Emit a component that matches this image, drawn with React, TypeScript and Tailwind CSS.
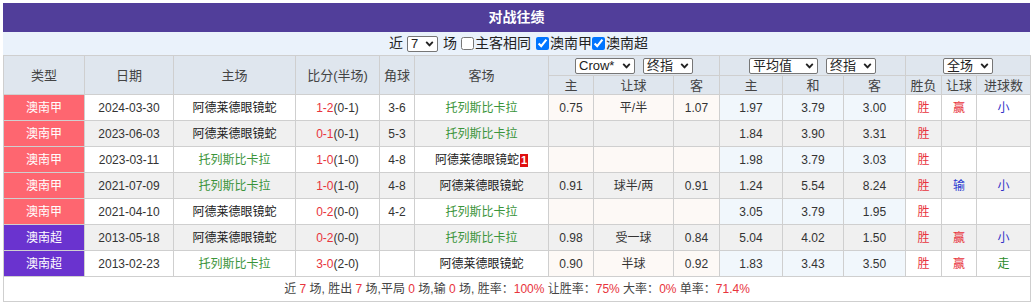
import { type ReactNode } from 'react'

type Row = {
  league: '澳南甲' | '澳南超'
  date: string
  home: string
  score: string
  half: string
  corner: string
  away: string
  badge?: string
  crow: [string, string, string]
  avg: [string, string, string]
  result: string
  handicap: string
  goals: string
}

const ADL = '阿德莱德眼镜蛇'
const TOL = '托列斯比卡拉'

const rows: Row[] = [
  { league: '澳南甲', date: '2024-03-30', home: ADL, score: '1-2', half: '(0-1)', corner: '3-6', away: TOL, crow: ['0.75', '平/半', '1.07'], avg: ['1.97', '3.79', '3.00'], result: '胜', handicap: '赢', goals: '小' },
  { league: '澳南甲', date: '2023-06-03', home: ADL, score: '0-1', half: '(0-1)', corner: '5-3', away: TOL, crow: ['', '', ''], avg: ['1.84', '3.90', '3.31'], result: '胜', handicap: '', goals: '' },
  { league: '澳南甲', date: '2023-03-11', home: TOL, score: '1-0', half: '(1-0)', corner: '4-8', away: ADL, badge: '1', crow: ['', '', ''], avg: ['1.98', '3.79', '3.03'], result: '胜', handicap: '', goals: '' },
  { league: '澳南甲', date: '2021-07-09', home: TOL, score: '1-0', half: '(1-0)', corner: '4-8', away: ADL, crow: ['0.91', '球半/两', '0.91'], avg: ['1.24', '5.54', '8.24'], result: '胜', handicap: '输', goals: '小' },
  { league: '澳南甲', date: '2021-04-10', home: ADL, score: '0-2', half: '(0-0)', corner: '4-2', away: TOL, crow: ['', '', ''], avg: ['3.05', '3.79', '1.95'], result: '胜', handicap: '', goals: '' },
  { league: '澳南超', date: '2013-05-18', home: ADL, score: '0-2', half: '(0-0)', corner: '', away: TOL, crow: ['0.98', '受一球', '0.84'], avg: ['5.04', '4.02', '1.50'], result: '胜', handicap: '赢', goals: '小' },
  { league: '澳南超', date: '2013-02-23', home: TOL, score: '3-0', half: '(2-0)', corner: '', away: ADL, crow: ['0.90', '半球', '0.92'], avg: ['1.83', '3.43', '3.50'], result: '胜', handicap: '赢', goals: '走' },
]

const colWidths = [81, 89, 122, 84, 35, 134, 45, 80, 46, 63, 61, 62, 36, 35, 54]

const Team = ({ name }: { name: string }) => (
  <span className={name === TOL ? 'text-[#3a943a]' : 'text-[#222]'}>{name}</span>
)

// select drawn like Chrome's Windows dropdown: thick chevron on the right
const Pick = ({ label, w }: { label: string; w: string }) => (
  <span className={`relative inline-block align-middle ${w}`}>
    <select
      defaultValue={label}
      className="block h-[16px] w-full appearance-none rounded-[2px] border border-[#767676] bg-white pl-[3px] text-left text-[13px] leading-[14px] text-[#222]"
    >
      <option>{label}</option>
    </select>
    <svg
      viewBox="0 0 10 10"
      className="pointer-events-none absolute right-[4px] top-[4px] h-[8px] w-[9px]"
      fill="none"
      stroke="#222"
      strokeWidth="2.4"
      strokeLinecap="round"
      strokeLinejoin="round"
    >
      <path d="M1.5 3 L5 6.8 L8.5 3" />
    </svg>
  </span>
)

const Cell = ({ children, className = '' }: { children?: ReactNode; className?: string }) => (
  <td className={`border border-[#cfcfcf] p-0 text-center ${className}`}>{children}</td>
)

const Head = ({ children, rowSpan, colSpan }: { children?: ReactNode; rowSpan?: number; colSpan?: number }) => (
  <th rowSpan={rowSpan} colSpan={colSpan} className="border border-[#cfcfcf] p-0 text-center font-normal leading-[17px] text-[#444]">
    {children}
  </th>
)

const goalColor = (g: string) => (g === '走' ? 'text-[#2a8a2a]' : 'text-[#3030c8]')
const hcColor = (h: string) => (h === '输' ? 'text-[#2a3ad0]' : 'text-[#e8343c]')

const App = () => {
  return (
    <div
      className="ml-[3px] mt-[3px] w-[1027px] text-[12px] text-[#333]"
      style={{ fontFamily: '"Liberation Sans", "Noto Sans CJK SC", sans-serif' }}
    >
      <div className="flex h-[29px] items-center justify-center bg-[#513e9a] text-[14px] font-bold text-white">
        对战往绩
      </div>
      <div className="flex h-[23px] items-center justify-center bg-[#eaf2fb] pl-[4px] text-[14px] text-[#222]">
        <span>近</span>
        <span className="ml-[4px] flex">
          <Pick label="7" w="w-[31px]" />
        </span>
        <span className="ml-[5px]">场</span>
        <label className="ml-[4px] flex items-center">
          <input type="checkbox" className="m-0 mr-[1px] h-[13px] w-[13px]" />
          主客相同
        </label>
        <label className="ml-[5px] flex items-center">
          <input type="checkbox" defaultChecked className="m-0 mr-[1px] h-[13px] w-[13px]" />
          澳南甲
        </label>
        <label className="flex items-center">
          <input type="checkbox" defaultChecked className="m-0 mr-[1px] h-[13px] w-[13px]" />
          澳南超
        </label>
      </div>
      <table className="w-[1027px] table-fixed border-collapse">
        <colgroup>
          {colWidths.map((w, i) => (
            <col key={i} style={{ width: w }} />
          ))}
        </colgroup>
        <thead className="bg-[#dfe6ee] text-[13px]">
          <tr className="h-[20px]">
            <Head rowSpan={2}>类型</Head>
            <Head rowSpan={2}>日期</Head>
            <Head rowSpan={2}>主场</Head>
            <Head rowSpan={2}>比分(半场)</Head>
            <Head rowSpan={2}>角球</Head>
            <Head rowSpan={2}>客场</Head>
            <Head colSpan={3}>
              <div className="flex items-center justify-center gap-[8px]">
                <Pick label="Crow*" w="w-[60px]" />
                <Pick label="终指" w="w-[50px]" />
              </div>
            </Head>
            <Head colSpan={3}>
              <div className="flex items-center justify-center gap-[8px]">
                <Pick label="平均值" w="w-[69px]" />
                <Pick label="终指" w="w-[50px]" />
              </div>
            </Head>
            <Head colSpan={3}>
              <div className="flex items-center justify-center">
                <Pick label="全场" w="w-[50px]" />
              </div>
            </Head>
          </tr>
          <tr className="h-[19px]">
            {['主', '让球', '客', '主', '和', '客', '胜负', '让球', '进球数'].map((t, i) => (
              <Head key={i}>{t}</Head>
            ))}
          </tr>
        </thead>
        <tbody>
          {rows.map((r, i) => {
            const even = i % 2 === 1
            const crowBg = even ? '' : 'bg-[#fdf9f6]'
            const avgBg = even ? '' : 'bg-[#f1f7fc]'
            return (
              <tr key={r.date} className={`h-[26px] ${even ? 'bg-[#f0f0f0]' : 'bg-white'}`}>
                <Cell className={`text-white ${r.league === '澳南甲' ? 'bg-[#fe6670]' : 'bg-[#6a33cf]'}`}>{r.league}</Cell>
                <Cell>{r.date}</Cell>
                <Cell>
                  <Team name={r.home} />
                </Cell>
                <Cell>
                  <span className="text-[#e8343c]">{r.score}</span>
                  <span>{r.half}</span>
                </Cell>
                <Cell>{r.corner}</Cell>
                <Cell>
                  <Team name={r.away} />
                  {r.badge && (
                    <span className="ml-[1px] inline-block bg-[#e01010] px-[1px] text-[11px] font-bold leading-[13px] text-white">
                      {r.badge}
                    </span>
                  )}
                </Cell>
                {r.crow.map((c, j) => (
                  <Cell key={`c${j}`} className={crowBg}>
                    {c}
                  </Cell>
                ))}
                {r.avg.map((c, j) => (
                  <Cell key={`a${j}`} className={avgBg}>
                    {c}
                  </Cell>
                ))}
                <Cell className="text-[#e8343c]">{r.result}</Cell>
                <Cell className={hcColor(r.handicap)}>{r.handicap}</Cell>
                <Cell className={goalColor(r.goals)}>{r.goals}</Cell>
              </tr>
            )
          })}
          <tr className="h-[25px] bg-white">
            <td colSpan={15} className="border border-[#cfcfcf] p-0 text-center text-[#444]">
              近 <span className="text-[#e8343c]">7</span> 场, 胜出 <span className="text-[#e8343c]">7</span> 场,平局{' '}
              <span className="text-[#e8343c]">0</span> 场,输 <span className="text-[#e8343c]">0</span> 场, 胜率：
              <span className="text-[#e8343c]">100%</span> 让胜率：<span className="text-[#e8343c]">75%</span> 大率：
              <span className="text-[#e8343c]">0%</span> 单率：<span className="text-[#e8343c]">71.4%</span>
            </td>
          </tr>
        </tbody>
      </table>
    </div>
  )
}

export default App
